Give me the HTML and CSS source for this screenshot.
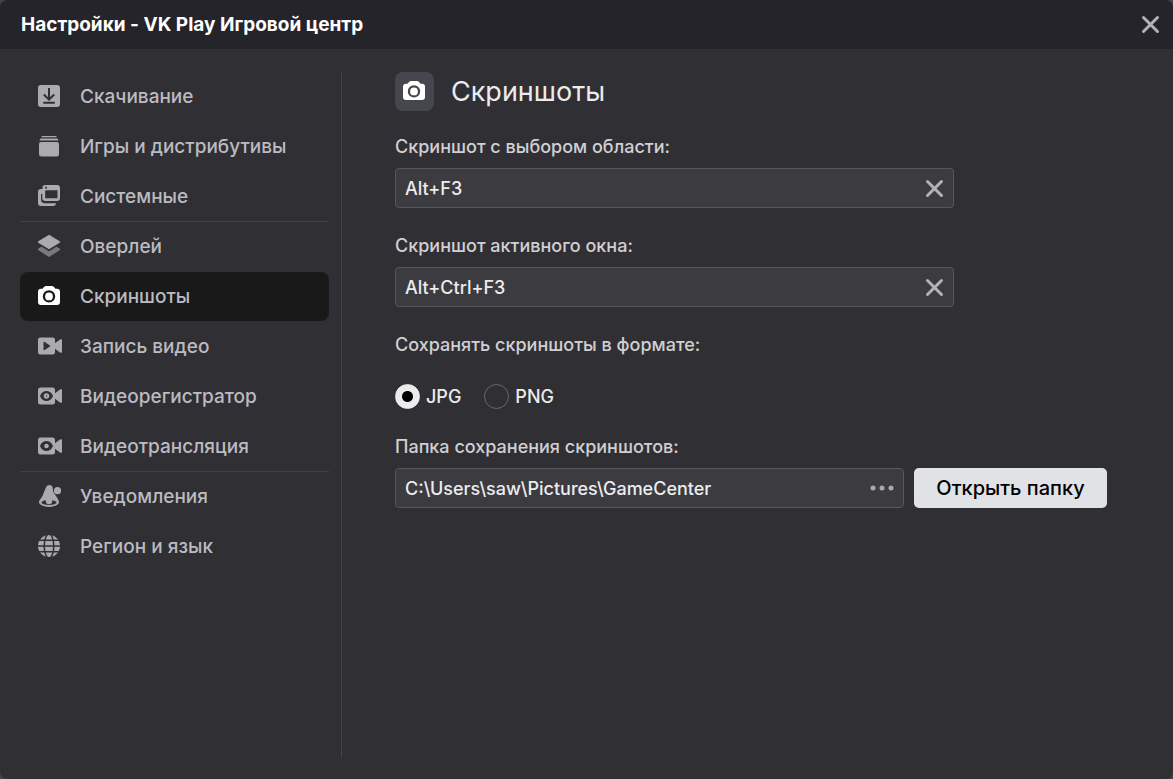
FILE: index.html
```
<!DOCTYPE html>
<html lang="ru">
<head>
<meta charset="utf-8">
<meta name="viewport" content="width=device-width, initial-scale=1">
<title>Настройки - VK Play Игровой центр</title>
<link rel="stylesheet" href="styles.css">
</head>
<body>
<div class="window">
  <header class="titlebar">
    <h1 class="titlebar-text">Настройки - VK Play Игровой центр</h1>
    <button class="icon-button" type="button" aria-label="Закрыть">
      <svg class="cross" viewBox="0 0 19 19"><path d="M2.500 2.500l14 14M16.500 2.500l-14 14"/></svg>
    </button>
  </header>
  <div class="body">
    <nav class="sidebar" aria-label="Разделы настроек">
      <ul class="menu">
        <li><a class="menu-link" href="#download">
          <svg class="icon" viewBox="0 0 24 24"><rect x="1" y="1" width="22" height="22" rx="3"/><path class="cut cut-bold" d="M12 4v11.500M6.800 10.500 12 15.700l5.200-5.200M6.300 18.700h11.400"/></svg>
          Скачивание</a></li>
        <li><a class="menu-link" href="#games">
          <svg class="icon" viewBox="0 0 24 24"><path d="M5 2h14l1 1.300H4ZM3.500 4.600h17l1 2h-19ZM4 8h16a2 2 0 0 1 2 2v10a2.500 2.500 0 0 1-2.500 2.500h-15A2.500 2.500 0 0 1 2 20V10a2 2 0 0 1 2-2Z"/></svg>
          Игры и дистрибутивы</a></li>
        <li><a class="menu-link" href="#system">
          <svg class="icon" viewBox="0 0 24 24"><path d="M4 5h2v13h13v1a3 3 0 0 1-3 3H4a3 3 0 0 1-3-3V8a3 3 0 0 1 3-3Z"/><path class="cut" d="M4.800 10v5.500a3 3 0 0 0 3 3H19"/><path fill-rule="evenodd" d="M8 1h12a3 3 0 0 1 3 3v10a3 3 0 0 1-3 3H8.500a3 3 0 0 1-3-3V3.500A2.500 2.500 0 0 1 8 1Zm.2 5.700v7.500h12.300V6.200H9.500ZM8.200 2.800v1.800H10V2.800Z"/></svg>
          Системные</a></li>
        <li class="menu-break"><a class="menu-link" href="#overlay">
          <svg class="icon" viewBox="0 0 24 24"><path d="M12 .8 22.700 7.200a1 1 0 0 1 0 1.600L12 15.200 1.300 8.800a1 1 0 0 1 0-1.600Z"/><path opacity=".6" d="m1 14.800 3.500-2.100L12 17.200l7.500-4.500 3.500 2.100v1.200l-11 7-11-7Z"/></svg>
          Оверлей</a></li>
        <li><a class="menu-link menu-link-active" href="#screenshots" aria-current="page">
          <svg class="icon" viewBox="0 0 24 24"><path fill-rule="evenodd" d="M9 2h6a3 3 0 0 1 2.500 1.500l.9 1.200H20a3 3 0 0 1 3 3V18a3 3 0 0 1-3 3H4a3 3 0 0 1-3-3V7.700a3 3 0 0 1 3-3h1.600l.9-1.200A3 3 0 0 1 9 2ZM12 6.200a6.200 6.200 0 1 0 0 12.400 6.200 6.200 0 0 0 0-12.400Z"/><circle cx="12" cy="12.400" r="3.900"/></svg>
          Скриншоты</a></li>
        <li><a class="menu-link" href="#recording">
          <svg class="icon icon-wide" viewBox="0 0 26 24"><path fill-rule="evenodd" d="M3.500 3.500h12A2.500 2.500 0 0 1 18 6v3.200l5-3.700c1-.6 2-.3 2 .8v11.400c0 1.100-1 1.400-2 .8l-5-3.700V18a2.500 2.500 0 0 1-2.500 2.500h-12A2.500 2.500 0 0 1 1 18V6a2.500 2.500 0 0 1 2.500-2.500ZM6.500 8.500v7c0 .8.500 1 1.200.6l5.200-3.500c.5-.4.5-.8 0-1.200L7.700 7.900c-.7-.4-1.200-.2-1.200.6Z"/></svg>
          Запись видео</a></li>
        <li><a class="menu-link" href="#dvr">
          <svg class="icon icon-wide" viewBox="0 0 26 24"><path fill-rule="evenodd" d="M3.500 3.500h12A2.500 2.500 0 0 1 18 6v3.200l5-3.700c1-.6 2-.3 2 .8v11.400c0 1.100-1 1.400-2 .8l-5-3.700V18a2.500 2.500 0 0 1-2.500 2.500h-12A2.500 2.500 0 0 1 1 18V6a2.500 2.500 0 0 1 2.500-2.500ZM3 12c2.300-6.800 10.700-6.800 13 0-2.300 6.800-10.700 6.800-13 0Z"/><path fill-rule="evenodd" d="M9.500 9.200a2.800 2.800 0 1 0 0 5.600 2.800 2.800 0 0 0 0-5.600Zm0 2.100a.7.700 0 1 1 0 1.400.7.700 0 0 1 0-1.400Z"/></svg>
          Видеорегистратор</a></li>
        <li><a class="menu-link" href="#stream">
          <svg class="icon icon-wide" viewBox="0 0 26 24"><path fill-rule="evenodd" d="M3.500 3.500h12A2.500 2.500 0 0 1 18 6v3.200l5-3.700c1-.6 2-.3 2 .8v11.400c0 1.100-1 1.400-2 .8l-5-3.700V18a2.500 2.500 0 0 1-2.500 2.500h-12A2.500 2.500 0 0 1 1 18V6a2.500 2.500 0 0 1 2.500-2.500ZM3 12c2.300-6.800 10.700-6.800 13 0-2.300 6.800-10.700 6.800-13 0Z"/><circle cx="9.500" cy="12" r="2.300"/></svg>
          Видеотрансляция</a></li>
        <li class="menu-break"><a class="menu-link" href="#notifications">
          <svg class="icon" viewBox="0 0 24 24"><circle cx="20.500" cy="6.700" r="3.600"/><path d="M8.500 4.500c1.300-4.500 6.500-4.500 7.200-1 .2 2.500.2 4 1.500 6 2 2.500 4.300 5.500 4.800 9H2c.3-3 2.300-4 3.700-7 .9-2.500 1.800-4.500 2.800-7Z"/><ellipse cx="12" cy="18.300" rx="10" ry="4.700"/><ellipse class="hole" cx="12" cy="18.500" rx="7.500" ry="2.600"/><circle cx="12" cy="17" r="3.200"/></svg>
          Уведомления</a></li>
        <li><a class="menu-link" href="#region">
          <svg class="icon" viewBox="0 0 24 24"><circle cx="12" cy="12" r="11"/><path class="cut" d="M0 6.200h24M0 12h24M0 17.800h24"/><ellipse class="cut" cx="12" cy="12" rx="4.800" ry="12"/></svg>
          Регион и язык</a></li>
      </ul>
    </nav>
    <main class="panel">
      <div class="panel-head">
        <span class="badge">
          <svg class="icon" viewBox="0 0 24 24"><path fill-rule="evenodd" d="M9 2h6a3 3 0 0 1 2.500 1.500l.9 1.200H20a3 3 0 0 1 3 3V18a3 3 0 0 1-3 3H4a3 3 0 0 1-3-3V7.700a3 3 0 0 1 3-3h1.600l.9-1.200A3 3 0 0 1 9 2ZM12 6.200a6.200 6.200 0 1 0 0 12.400 6.200 6.200 0 0 0 0-12.400Z"/><circle cx="12" cy="12.400" r="3.900"/></svg>
        </span>
        <h2 class="panel-title">Скриншоты</h2>
      </div>
      <div class="field">
        <label class="caption" for="area">Скриншот с выбором области:</label>
        <div class="control">
          <input class="control-input" id="area" type="text" value="Alt+F3">
          <button class="icon-button" type="button" aria-label="Очистить">
            <svg class="cross" viewBox="0 0 19 19"><path d="M2.500 2.500l14 14M16.500 2.500l-14 14"/></svg>
          </button>
        </div>
      </div>
      <div class="field">
        <label class="caption" for="active">Скриншот активного окна:</label>
        <div class="control">
          <input class="control-input" id="active" type="text" value="Alt+Ctrl+F3">
          <button class="icon-button" type="button" aria-label="Очистить">
            <svg class="cross" viewBox="0 0 19 19"><path d="M2.500 2.500l14 14M16.500 2.500l-14 14"/></svg>
          </button>
        </div>
      </div>
      <fieldset class="formats">
        <legend class="caption">Сохранять скриншоты в формате:</legend>
        <div class="options">
          <label class="option"><input class="radio" type="radio" name="format" checked>JPG</label>
          <label class="option"><input class="radio" type="radio" name="format">PNG</label>
        </div>
      </fieldset>
      <div class="field field-wide">
        <label class="caption" for="folder">Папка сохранения скриншотов:</label>
        <div class="folder-row">
          <div class="control">
            <input class="control-input" id="folder" type="text" value="C:\Users\saw\Pictures\GameCenter">
            <button class="icon-button" type="button" aria-label="Выбрать папку">
              <svg class="dots" viewBox="0 0 24 6"><circle cx="3" cy="3" r="2.500"/><circle cx="12" cy="3" r="2.500"/><circle cx="21" cy="3" r="2.500"/></svg>
            </button>
          </div>
          <button class="open-button" type="button">Открыть папку</button>
        </div>
      </div>
    </main>
  </div>
</div>
</body>
</html>
```

FILE: styles.css
```
* {
  box-sizing: border-box;
}

body {
  margin: 0;
  background: #414147;
  color: #ececee;
  font: 500 18px/24px Inter, "Noto Sans", sans-serif;
}

button,
input {
  font: inherit;
  color: inherit;
}

.window {
  display: flex;
  flex-direction: column;
  min-height: 100vh;
  border-radius: 8px;
  overflow: hidden;
  background: #302f34;
}

.titlebar {
  display: flex;
  align-items: center;
  justify-content: space-between;
  height: 49px;
  padding: 0 13px 0 21px;
  background: #25242a;
}

.titlebar-text {
  margin: 0;
  font-size: 19px;
  font-weight: 700;
  color: #fff;
}

.icon-button {
  display: flex;
  padding: 0;
  border: 0;
  background: none;
  color: #b3b2b7;
  cursor: pointer;
}

.cross {
  width: 19px;
  height: 19px;
  fill: none;
  stroke: currentColor;
  stroke-width: 3;
  stroke-linecap: round;
}

.dots {
  width: 24px;
  height: 6px;
  fill: #aaa9ae;
}

.body {
  display: flex;
  flex: 1;
  padding: 23px 66px 21px 20px;
}

.sidebar {
  flex: none;
  width: 322px;
  padding-right: 12px;
  border-right: 1px solid #434248;
}

.menu {
  display: grid;
  margin: 0;
  padding: 0;
  list-style: none;
}

.menu li {
  border-top: 1px solid transparent;
}

.menu li:first-child {
  border-top: 0;
}

.menu .menu-break {
  border-top-color: #434248;
}

.menu-link {
  display: flex;
  align-items: center;
  gap: 19px;
  height: 49px;
  padding-left: 17px;
  border-radius: 8px;
  color: #bcbbc0;
  font-size: 19px;
  text-decoration: none;
}

.menu-link-active {
  background: #19191a;
}

.icon {
  flex: none;
  width: 24px;
  height: 24px;
  margin-bottom: 1px;
  fill: #abaaad;
}

.icon-wide {
  width: 26px;
  margin-right: -2px;
}

.menu-link-active .icon,
.badge .icon {
  fill: #fff;
}

.cut {
  fill: none;
  stroke: #302f34;
  stroke-width: 1.500;
}

.cut-bold {
  stroke-width: 2;
}

.hole {
  fill: #302f34;
}

.panel {
  flex: 1;
  min-width: 0;
  padding-left: 53px;
}

.panel-head {
  display: flex;
  align-items: center;
  gap: 17px;
  margin-bottom: 24px;
}

.badge {
  display: flex;
  align-items: center;
  justify-content: center;
  width: 39px;
  height: 39px;
  padding-right: 1px;
  border-radius: 8px;
  background: #46464e;
}

.panel-title {
  margin: 0;
  font-size: 27px;
  line-height: 39px;
  font-weight: 400;
}

.field {
  max-width: 559px;
  margin-bottom: 26px;
}

.field-wide {
  max-width: none;
}

.caption {
  display: block;
  margin-bottom: 9px;
  padding: 0;
  color: #d0cfd3;
}

.control {
  display: flex;
  flex: 1;
  align-items: center;
  height: 40px;
  padding: 0 9px;
  border: 1px solid #57565b;
  border-radius: 4px;
  background: #3c3b40;
}

.control-input {
  flex: 1;
  min-width: 0;
  height: 36px;
  padding: 0;
  border: 0;
  outline: 0;
  background: none;
}

.formats {
  margin: 0 0 26px;
  padding: 0;
  border: 0;
}

.options {
  display: flex;
  gap: 23px;
  padding-top: 18px;
}

.option {
  display: flex;
  align-items: center;
  gap: 6px;
}

.radio {
  appearance: none;
  width: 25px;
  height: 25px;
  margin: 0;
  border: 1px solid #68676c;
  border-radius: 50%;
}

.radio:checked {
  border-color: #ececee;
  background: radial-gradient(circle, #000 5px, #ececee 6px);
}

.folder-row {
  display: flex;
  gap: 10px;
}

.open-button {
  flex: none;
  width: 193px;
  height: 40px;
  padding: 0;
  border: 0;
  border-radius: 5px;
  background: #e1e2e6;
  color: #000;
  font-size: 20px;
  cursor: pointer;
}
```
